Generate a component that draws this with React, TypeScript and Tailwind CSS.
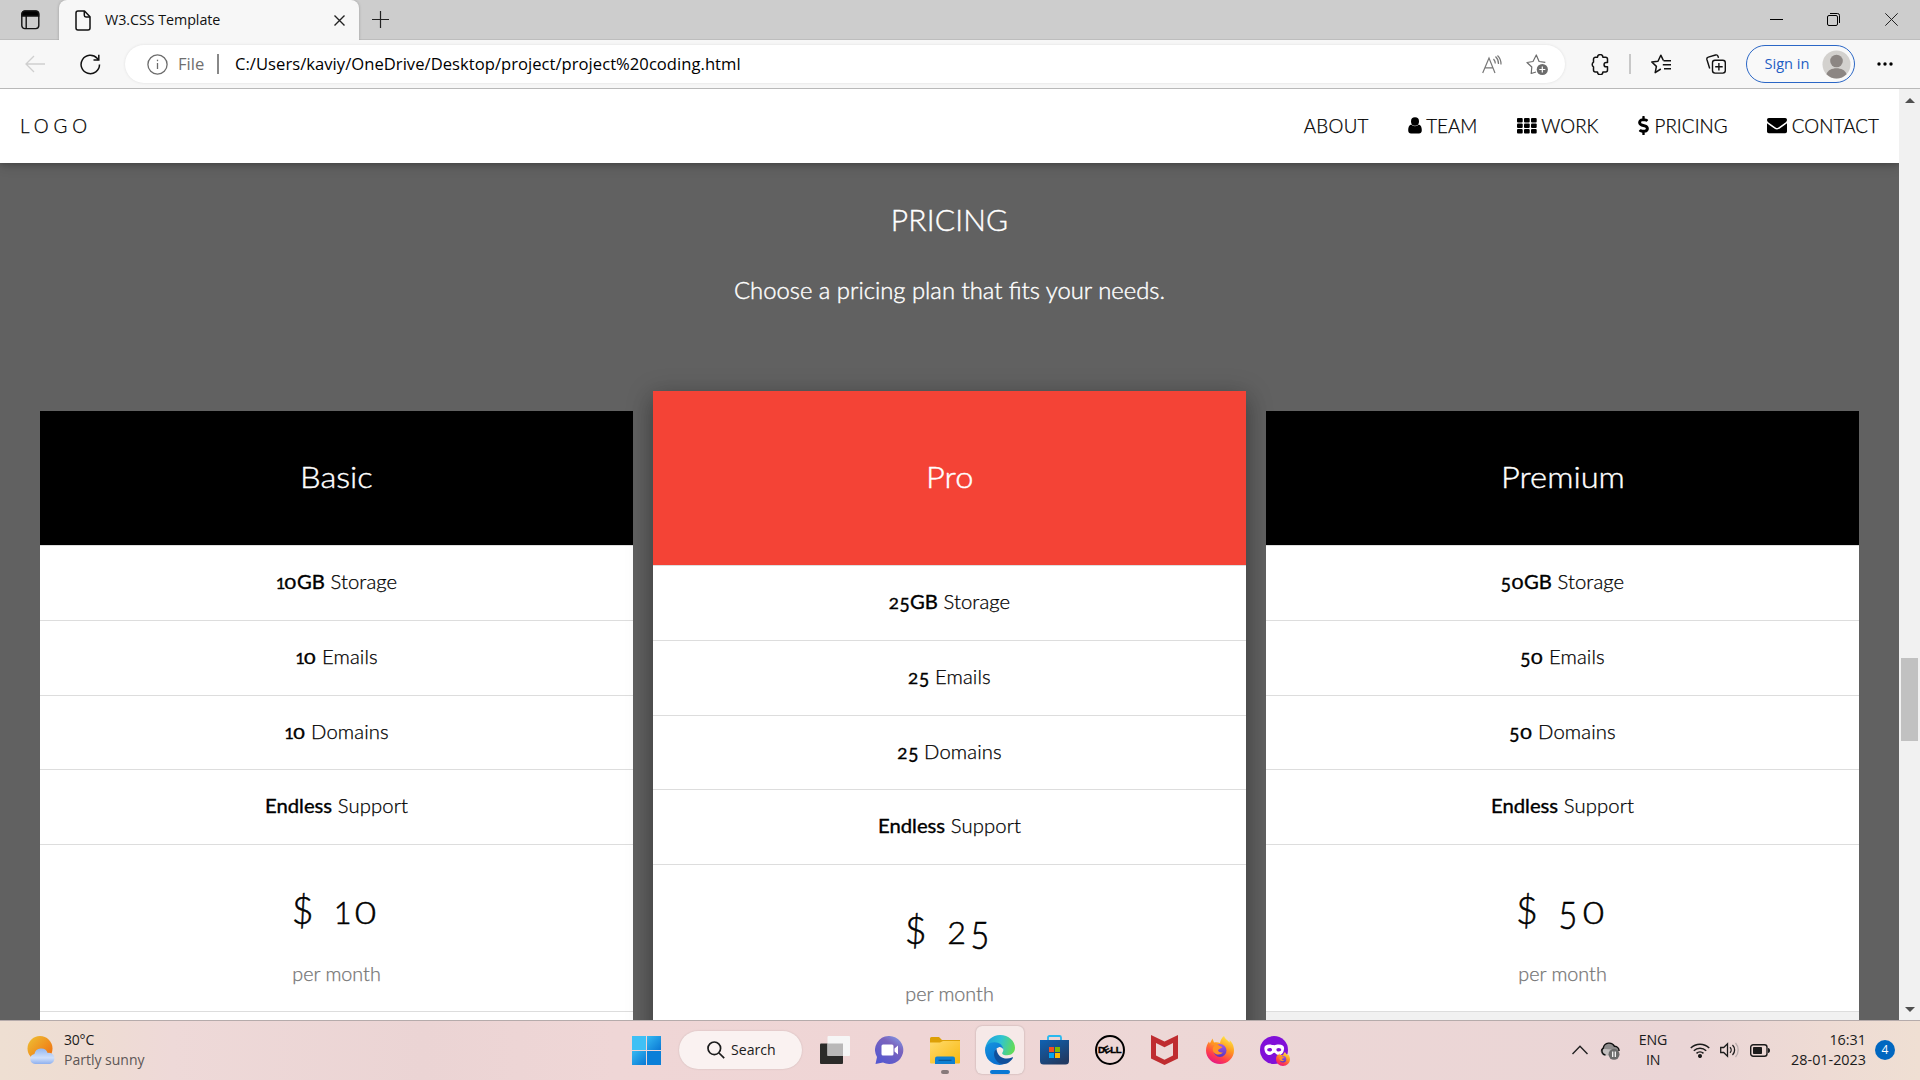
import type { ReactNode } from 'react';
import { FaDollarSign } from 'react-icons/fa';

const RALE = "font-['Lato',sans-serif] font-light [-webkit-text-stroke:0.25px_currentColor]";
const UI = "font-['Open_Sans',sans-serif]";

const digitClass: Record<string, string> = {
  '0': 'w-[0.75em] scale-x-[1.2]',
  '1': 'w-[0.53em]',
  '2': 'w-[0.63em] scale-x-105',
  '5': 'w-[0.65em] translate-y-[0.1em] scale-x-105 scale-y-[1.22]',
};

/* Old-style figures: x-height digits, with the five dropping below the baseline. */
function Figures({ value, gap = '' }: { value: string; gap?: string }) {
  return (
    <span className="text-[0.82em] leading-none tracking-normal">
      {value.split('').map((d, i) => (
        <span key={i} className={`inline-block text-center leading-none ${gap} ${digitClass[d]}`}>{d}</span>
      ))}
    </span>
  );
}

function TabStrip() {
  return (
    <div className="flex h-10 items-center bg-[#cdcdcd] shadow-[inset_0_-1px_0_#bdbdbd]">
      <svg className="ml-[21px] shrink-0" width="19" height="20" viewBox="0 0 19 20" fill="none" stroke="#111" strokeWidth="1.4">
        <rect x="0.8" y="1.2" width="17" height="17.4" rx="3" />
        <path d="M1 6V4a3 3 0 0 1 3-3h10.600a3 3 0 0 1 3 3v2z" fill="#000" />
        <path d="M5.200 6v12.500" />
      </svg>
      <div className="ml-[19px] flex h-10 w-[300px] items-center rounded-t-lg bg-[#f7f7f7] shadow-[0_0_3px_rgba(0,0,0,0.25)]">
        <svg className="ml-4 shrink-0" width="16" height="21" viewBox="0 0 16 21" fill="none" stroke="#111" strokeWidth="1.5" strokeLinejoin="round">
          <path d="M3 1h6.500L15 6.700V18a2 2 0 0 1-2 2H3a2 2 0 0 1-2-2V3a2 2 0 0 1 2-2z" />
          <path d="M9.300 1v4.200A1.800 1.800 0 0 0 11 7h4" />
        </svg>
        <span className="ml-[14px] w-[229px] text-[14.3px] leading-5 tracking-[-0.05px] text-[#111]">W3.CSS Template</span>
        <svg width="11" height="11" viewBox="0 0 11 11" stroke="#222" strokeWidth="1.4"><path d="M0.500 0.500l10 10M10.500 0.500l-10 10" /></svg>
      </div>
      <svg className="ml-[13px] mb-px" width="17" height="17" viewBox="0 0 17 17" stroke="#222" strokeWidth="1.2"><path d="M8.500 0v17M0 8.500h17" /></svg>
      <div className="ml-auto mr-[22px] flex items-center pb-px">
        <svg width="13" height="13" viewBox="0 0 13 13" stroke="#000"><path d="M0 6.500h13" /></svg>
        <svg className="ml-[44px]" width="13" height="13" viewBox="0 0 13 13" fill="none" stroke="#000">
          <rect x="0.500" y="2.500" width="10" height="10" rx="1.500" />
          <path d="M3 0.500h7.500a2 2 0 0 1 2 2V10" />
        </svg>
        <svg className="ml-[45px]" width="13" height="13" viewBox="0 0 13 13" stroke="#222"><path d="M0.300 0.300l12.400 12.400M12.700 0.300L0.300 12.700" /></svg>
      </div>
    </div>
  );
}

function Toolbar() {
  return (
    <div className="flex h-[49px] items-center border-b border-[#b9b9b9] bg-[#f7f7f7]">
      <svg className="ml-[25px] mb-px" width="20" height="18" viewBox="0 0 20 18" fill="none" stroke="#cfcfcf" strokeWidth="1.3"><path d="M9 1L1 9l8 8M1 9h19" /></svg>
      <svg className="ml-[35px]" width="21" height="21" viewBox="0 0 21 21" fill="none" stroke="#111" strokeWidth="1.5">
        <path d="M19.500 10.500a9.200 9.200 0 1 1-2.400-6.200l1.300 1.700" />
        <path d="M18.800 0.800v5.300h-5.300" />
      </svg>
      <div className="ml-[24px] flex h-[38px] w-[1440px] items-center rounded-full bg-white shadow-[0_0_3px_rgba(0,0,0,0.1)]">
        <svg className="ml-[22px]" width="21" height="21" viewBox="0 0 21 21" fill="none" stroke="#6c6c6c" strokeWidth="1.300">
          <circle cx="10.500" cy="10.500" r="9.600" /><path d="M10.500 9v6" /><path d="M10.500 5.700v1.500" />
        </svg>
        <span className="ml-[10px] w-[39px] text-[16.600px] text-[#6f6f6f]">File</span>
        <span className="h-5 w-[1.500px] bg-[#888]" />
        <span className="ml-[16.500px] w-[1247px] text-[16.600px] tracking-[0.030px] text-black">C:/Users/kaviy/OneDrive/Desktop/project/project%20coding.html</span>
        <svg width="20" height="19" viewBox="0 0 20 19" fill="none" stroke="#777" strokeWidth="1.200">
          <path d="M0.700 18L7 3l6 15M3 12.800h8" /><path d="M11.500 4a7 7 0 0 1 1.800 4.500M13.500 1.500a10 10 0 0 1 3 7.500M15.500 0.500a12 12 0 0 1 3.500 9" />
        </svg>
        <svg className="ml-[24px] mt-0.5" width="23" height="22" viewBox="0 0 23 22" fill="none" stroke="#6c6c6c" strokeWidth="1.200" strokeLinejoin="round">
          <path d="M10 18l-4.800 1.500 0.600-6.500L1 8.500l6-1L10.300 1l2.800 6.500 6.200 0.800" />
          <circle cx="16.300" cy="15.500" r="5.600" fill="#6c6c6c" stroke="none" /><path d="M16.300 12.500v6M13.300 15.500h6" stroke="#fff" />
        </svg>
      </div>
      <svg className="ml-[25px]" width="19" height="21" viewBox="0 0 19 21" fill="none" stroke="#111" strokeWidth="1.500" strokeLinejoin="round">
        <path d="M5.500 3.300h2a2.700 2.700 0 0 1 5.400 0h2.600a2 2 0 0 1 2 2v3.200h-1.300a2.100 2.100 0 0 0 0 4.300h1.300v3.200a2 2 0 0 1-2 2h-2.600a2.700 2.700 0 0 1-5.400 0h-2a2 2 0 0 1-2-2v-3.200a2.700 2.700 0 0 1 0-4.600V5.300a2 2 0 0 1 2-2z" />
      </svg>
      <span className="ml-[20px] h-5 w-[1.500px] bg-[#c8c8c8]" />
      <svg className="ml-[20px]" width="20" height="20" viewBox="0 0 20 20" fill="none" stroke="#111" strokeWidth="1.500" strokeLinejoin="round">
        <path d="M9.800 15L4.200 18.600l1.200-6.200L0.800 8l6.200-0.700L9.800 1.200l2.600 5.300M12.500 6.800H20M11.800 10.800H20M13 14.800h7" />
      </svg>
      <svg className="ml-[35px]" width="20" height="20" viewBox="0 0 20 20" fill="none" stroke="#111" strokeWidth="1.400">
        <rect x="6.500" y="6.300" width="12.800" height="12.800" rx="2.500" /><path d="M12.900 9v7.500M9.200 12.700h7.500M3.700 14.500L0.900 5.500a2 2 0 0 1 1.400-2.400L9.500 1a2 2 0 0 1 2.500 1.300l0.500 1.600" />
      </svg>
      <div className="ml-[20px] flex h-[38px] w-[109px] items-center rounded-full border-[1.500px] border-[#2b67c6] bg-[#f9f9f9]">
        <span className="ml-[18px] w-[57px] text-[14.600px] text-[#1f5fc4]">Sign in</span>
        <svg width="29" height="29" viewBox="0 0 29 29"><circle cx="14.500" cy="14.500" r="14" fill="#d3d1ce" /><circle cx="14.500" cy="11" r="6.300" fill="#8c8683" /><path d="M4.500 24.300c2-8 18-8 20 0a14 14 0 0 1-20 0z" fill="#8c8683" /></svg>
      </div>
      <svg className="ml-[22px]" width="16" height="4" viewBox="0 0 16 4"><circle cx="2" cy="2" r="1.700" /><circle cx="8" cy="2" r="1.700" /><circle cx="14" cy="2" r="1.700" /></svg>
    </div>
  );
}

function UserIcon() {
  return <svg width="14" height="17" viewBox="0 0 14 17"><ellipse cx="7" cy="4.500" rx="4" ry="4.200" /><path d="M3.200 7.600C1 8 0.200 10.500 0.200 13.300 0.200 15.500 1.400 16.400 3 16.400h8c1.600 0 2.800-0.900 2.800-3.100 0-2.800-0.800-5.300-3-5.700a5 5 0 0 1-7.600 0z" /></svg>;
}
function GridIcon() {
  return (
    <svg width="20" height="16" viewBox="0 0 20 16">
      {[0, 5.500, 11].map((y) => [0, 7, 14].map((x) => <rect key={`${x}-${y}`} x={x} y={y} width="5.700" height="4.400" rx="1" />))}
    </svg>
  );
}
function MailIcon() {
  return <svg width="20" height="17" viewBox="0 0 20 17"><path d="M1.800 1h16.400A1.800 1.800 0 0 1 20 2.800c0 1.200-0.900 2.300-1.900 3l-5.600 3.900c-0.700 0.500-1.700 1.300-2.500 1.300s-1.800-0.800-2.500-1.300L1.900 5.800C0.900 5.100 0 4 0 2.800A1.800 1.800 0 0 1 1.800 1z" /><path d="M0 6.300c1.900 1.700 4 2.900 6.200 4.500 1.100 0.800 2.400 1.700 3.800 1.700s2.700-0.900 3.800-1.700c2.200-1.600 4.300-2.800 6.200-4.500v8.200a1.800 1.800 0 0 1-1.800 1.800H1.800A1.800 1.800 0 0 1 0 14.500z" /></svg>;
}

function NavItem({ icon, className, children }: { icon?: ReactNode; className: string; children: string }) {
  return (
    <a className={`flex items-center ${className}`}>
      {icon}
      <span>{children}</span>
    </a>
  );
}

function Nav() {
  return (
    <nav className={`relative z-10 flex h-[74px] shrink-0 items-center bg-white pb-px text-[18.750px] leading-7 text-black shadow-[0_2px_5px_rgba(0,0,0,0.16),0_2px_12px_rgba(0,0,0,0.2)] ${RALE}`}>
      <span className="ml-[20px] tracking-[5px]">LOGO</span>
      <div className="ml-auto mr-[20px] flex items-center">
        <NavItem className="mr-[39.500px] tracking-[0.300px]">ABOUT</NavItem>
        <NavItem className="mr-[40px] gap-1" icon={<UserIcon />}>TEAM</NavItem>
        <NavItem className="mr-[40px] gap-[4px]" icon={<GridIcon />}>WORK</NavItem>
        <NavItem className="mr-[39px] gap-[5px] tracking-[0.100px]" icon={<FaDollarSign className="h-[19px] w-[11px]" />}>PRICING</NavItem>
        <NavItem className="gap-[5px] tracking-[0.100px]" icon={<MailIcon />}>CONTACT</NavItem>
      </div>
    </nav>
  );
}

function Row({ figure, strong, label, height }: { figure?: string; strong?: string; label: string; height: string }) {
  return (
    <li className={`border-b border-[#ddd] pt-[22px] text-center text-[18.750px] leading-7 ${height}`}>
      <div className="scale-x-[1.08]">
        <b className="font-normal [-webkit-text-stroke:0.350px_currentColor]">
          {figure && <Figures value={figure} />}
          {strong}
        </b>
        <span className="tracking-[0.100px]"> {label}</span>
      </div>
    </li>
  );
}

function Plan({ name, amount, featured, footer }: { name: string; amount: string; featured?: boolean; footer: string }) {
  return (
    <ul className={`w-[593px] shrink-0 bg-white text-black ${featured ? 'shadow-[0_10px_20px_rgba(0,0,0,0.19),0_5px_25px_rgba(0,0,0,0.25)]' : 'mt-5'}`}>
      <li className={`flex items-center justify-center border-b border-[#ddd] pb-[3px] text-[30px] text-white [-webkit-text-stroke:0.400px_currentColor] ${featured ? 'h-[175px] bg-[#f44336]' : 'h-[135px] bg-black'}`}>
        <span className="scale-x-[1.088]">{name}</span>
      </li>
      <Row figure={amount} strong="GB" label="Storage" height="h-[75px]" />
      <Row figure={amount} label="Emails" height="h-[75px]" />
      <Row figure={amount} label="Domains" height="h-[74px]" />
      <Row strong="Endless" label="Support" height="h-[75px]" />
      <li className="h-[167px] border-b border-[#ddd] pt-[37px] text-center">
        <h2 className="h-[56px] text-[37.500px] leading-[56px] tracking-[5px] [-webkit-text-stroke:0.500px_currentColor]">$ <Figures value={amount} gap="mr-[4px]" /></h2>
        <p className="mt-[22px] scale-x-[1.055] text-[18.750px] leading-[28px] text-[#757575]">per month</p>
      </li>
      <li className={`h-[60px] ${footer}`} />
    </ul>
  );
}

function Pricing() {
  return (
    <main className={`flex min-h-0 flex-1 flex-col items-center overflow-hidden bg-[#616161] text-white ${RALE}`}>
      <h3 className="mt-[34px] text-[30px] leading-[45px] tracking-[0.200px] [-webkit-text-stroke:0.400px_currentColor]">PRICING</h3>
      <p className="mt-[32px] scale-x-[1.059] text-[22.500px] leading-[34px] [-webkit-text-stroke:0.400px_currentColor]">Choose a pricing plan that fits your needs.</p>
      <div className="mt-[83px] flex items-start gap-5">
        <Plan name="Basic" amount="10" footer="bg-white" />
        <Plan name="Pro" amount="25" featured footer="bg-white" />
        <Plan name="Premium" amount="50" footer="bg-[#f1f1f1]" />
      </div>
    </main>
  );
}

function Scrollbar() {
  return (
    <div className="flex w-[21px] shrink-0 flex-col items-center bg-[#f1f1f1]">
      <span className="mt-[9px] border-x-[5px] border-b-[5px] border-x-transparent border-b-[#505050]" />
      <span className="mt-[555px] h-[83px] w-[17px] bg-[#c1c1c1]" />
      <span className="mt-auto mb-[8px] border-x-[5px] border-t-[5px] border-x-transparent border-t-[#505050]" />
    </div>
  );
}

function TaskbarApp({ children, active, mark }: { children: ReactNode; active?: boolean; mark?: string }) {
  return (
    <div className="flex w-[55px] justify-center">
      <div className={`relative flex size-12 items-center justify-center rounded-md ${active ? 'bg-[#f6e9e8] shadow-[0_0_2px_rgba(0,0,0,0.25)]' : ''}`}>
        {children}
        {mark && <span className={`absolute bottom-0 h-1 rounded-full ${mark}`} />}
      </div>
    </div>
  );
}

function EdgeIcon() {
  return (
    <svg width="30" height="30" viewBox="0 0 24 24">
      <defs>
        <linearGradient id="edgeTop" x1="0" y1="0.300" x2="1" y2="0.500"><stop offset="0" stopColor="#1fa0dc" /><stop offset="0.500" stopColor="#2fc3d2" /><stop offset="1" stopColor="#63dc55" /></linearGradient>
        <linearGradient id="edgeMid" x1="0" y1="0" x2="0.500" y2="1"><stop offset="0" stopColor="#1595df" /><stop offset="1" stopColor="#0a6fcf" /></linearGradient>
      </defs>
      <path d="M0.200 11C0.900 4.500 6 0 12 0c7 0 12 5 12 10.200 0 3.800-3 6-6.300 6-2.500 0-4-0.900-4-1.700 0-0.500 1-1.200 1-2.800C14.700 9 12 6.700 8 6.700 4 6.700 1.500 8.500 0.200 11z" fill="url(#edgeTop)" />
      <path d="M0 12c0-3.500 3.300-6.300 7.500-6.300 4 0 7.200 2.500 7.200 6-0.700-1.400-2-2.200-3.500-2-2.700 0.500-4 3.500-3 7 1 3.500 3.500 5.700 6.300 6.900-8 1.700-14.500-4-14.500-11.600z" fill="url(#edgeMid)" />
      <path d="M9.200 10.900c-3.400 2.600-2.400 9.300 3 12.100 4.300 1.300 8-1.300 10-4.400 0.500-0.800 0-1-0.700-0.700-5 2.400-11.800 0-12.300-7z" fill="#10509c" />
    </svg>
  );
}

function FirefoxIcon({ size, id }: { size: number; id: string }) {
  return (
    <svg width={size} height={size} viewBox="0 0 28 28">
      <defs>
        <linearGradient id={`${id}-f`} x1="0.800" y1="0" x2="0.300" y2="1"><stop offset="0" stopColor="#fff04a" /><stop offset="0.400" stopColor="#ff9a1f" /><stop offset="0.750" stopColor="#ff3c4d" /><stop offset="1" stopColor="#e3158a" /></linearGradient>
        <linearGradient id={`${id}-g`} x1="0.500" y1="0" x2="0.500" y2="1"><stop offset="0" stopColor="#a05ae8" /><stop offset="1" stopColor="#5a35bf" /></linearGradient>
      </defs>
      <path d="M18 0c1 3 3.500 4 5.500 6.500 0.300-1 0.200-1.600 0-2.200C27 7 28 11 28 14.500 28 22 21.800 28 14 28S0 22 0 14.500C0 10.500 1.500 7.500 3 5.500l0.800 2L6.500 2.500 8 6.500c2.500-0.500 4.500-0.300 6 0.500C14.500 4 16 1.500 18 0z" fill={`url(#${id}-f)`} />
      <circle cx="14" cy="14.500" r="6.500" fill={`url(#${id}-g)`} />
      <path d="M4 8c3-1.500 6-1 9 1.500 1.500 1 3 1 3.500 1.500-1 1.800-3.500 1.500-4.500 3 0 2 2.500 3 5 2.300-2 2.700-6 3-8.500 0.700C6 15 6.500 11 8.500 9.500 7 8.500 5.500 8.200 4 8z" fill="#ff9325" />
    </svg>
  );
}

function Taskbar() {
  return (
    <footer className={`flex h-[60px] shrink-0 items-center border-t border-[#b5abab] pb-px bg-[linear-gradient(90deg,#eedfd2_0%,#eedcd3_5%,#eed9d8_9%,#ebd4d4_22%,#efd6d6_32%,#efd5d5_48%,#edd7d6_60%,#ead5d6_88%,#eedbd4_95%,#efdfd3_100%)] ${UI}`}>
      <div className="flex w-[619px] items-center pl-[27px]">
        <svg width="29" height="30" viewBox="0 0 29 30">
          <defs>
            <linearGradient id="sun" x1="0" y1="0" x2="1" y2="1"><stop offset="0" stopColor="#eec235" /><stop offset="1" stopColor="#f0660c" /></linearGradient>
            <linearGradient id="cloud" x1="0" y1="0" x2="0" y2="1"><stop offset="0" stopColor="#94b7f0" /><stop offset="0.600" stopColor="#d0e0fb" /><stop offset="1" stopColor="#8fb0ee" /></linearGradient>
          </defs>
          <circle cx="13" cy="13.500" r="12.500" fill="url(#sun)" />
          <path d="M8 29a5 5 0 0 1-0.600-9.900 7 7 0 0 1 13.300-1.200A5.600 5.600 0 0 1 23 29z" fill="url(#cloud)" />
        </svg>
        <div className="ml-[8px] text-[14px] leading-[20px]">
          <div className="tracking-[-0.200px] text-[#1b1b1b]">30°C</div>
          <div className="text-[#5d5655]">Partly sunny</div>
        </div>
      </div>
      <TaskbarApp>
        <svg width="29" height="29" viewBox="0 0 29 29">
          <defs><linearGradient id="win" x1="0" y1="0" x2="1" y2="1"><stop offset="0" stopColor="#35b9f2" /><stop offset="1" stopColor="#0a78d4" /></linearGradient></defs>
          <rect width="14" height="14" fill="#3fc0f5" /><rect x="15" width="14" height="14" fill="url(#win)" /><rect y="15" width="14" height="14" fill="url(#win)" /><rect x="15" y="15" width="14" height="14" fill="#0b7fd8" />
        </svg>
      </TaskbarApp>
      <div className="ml-[5px] mr-[5px] flex h-[38px] w-[123px] items-center rounded-full bg-[#faf2f1] shadow-[0_0_2px_rgba(0,0,0,0.15)]">
        <svg className="ml-[28px]" width="18" height="18" viewBox="0 0 18 18" fill="none" stroke="#1b1b1b" strokeWidth="1.700"><circle cx="7.300" cy="7.300" r="6.300" /><path d="M12 12l5.200 5.200" /></svg>
        <span className="ml-[6px] text-[14.100px] text-[#1b1b1b]">Search</span>
      </div>
      <TaskbarApp>
        <svg width="30" height="28" viewBox="0 0 30 28"><rect y="7.500" width="23" height="20.500" rx="1" fill="#2b2b29" /><rect x="7.500" width="22.500" height="20" rx="1" fill="#f6f6f6" /><path d="M7.500 7.500H23V20H7.500z" fill="#b9b8b8" /></svg>
      </TaskbarApp>
      <TaskbarApp>
        <svg width="29" height="28" viewBox="0 0 29 28">
          <defs><linearGradient id="chat" x1="1" y1="0" x2="0.300" y2="1"><stop offset="0" stopColor="#82a6f0" /><stop offset="0.400" stopColor="#7a63bd" /><stop offset="1" stopColor="#5558cf" /></linearGradient></defs>
          <path d="M14.500 0A14 14 0 1 1 8 26.500L0.500 28 2 21A14 14 0 0 1 14.500 0z" fill="url(#chat)" /><rect x="6.500" y="8.500" width="12" height="11" rx="1.500" fill="#fff" /><path d="M19.500 12.500l3.500-3v9l-3.500-3z" fill="#fff" />
        </svg>
      </TaskbarApp>
      <TaskbarApp mark="w-2 bg-[#87797a]">
        <svg width="30" height="27" viewBox="0 0 30 27"><defs><linearGradient id="folder" x1="0" y1="0" x2="1" y2="1"><stop offset="0" stopColor="#ffda6b" /><stop offset="1" stopColor="#f9b90f" /></linearGradient></defs><path d="M0 1.500A1.500 1.500 0 0 1 1.500 0H9l3 3h18v6H0z" fill="#dda006" /><path d="M0 5.500h10l3-1.500h17v21.500a1 1 0 0 1-1 1H1a1 1 0 0 1-1-1z" fill="url(#folder)" /><path d="M5 27v-5.500A2 2 0 0 1 7 19.500h16a2 2 0 0 1 2 2V27z" fill="#0f80d2" /><path d="M8.500 23.300h13" stroke="#0b5594" strokeWidth="1.200" /></svg>
      </TaskbarApp>
      <TaskbarApp active mark="w-5 bg-[#0a78d4]"><EdgeIcon /></TaskbarApp>
      <TaskbarApp>
        <svg width="29" height="30" viewBox="0 0 29 30"><defs><linearGradient id="store" x1="0" y1="0" x2="0.600" y2="1"><stop offset="0" stopColor="#0f62b3" /><stop offset="1" stopColor="#213a63" /></linearGradient></defs><path d="M8 6V2.500A1.500 1.500 0 0 1 9.500 1h10A1.500 1.500 0 0 1 21 2.500V6" fill="none" stroke="#29b9ef" strokeWidth="1.800" /><path d="M0 5h29v21a3.500 3.500 0 0 1-3.500 3.500h-22A3.500 3.500 0 0 1 0 26z" fill="url(#store)" /><path d="M9 12h5v5H9z" fill="#f25022" /><path d="M15 12h5v5h-5z" fill="#7fba00" /><path d="M9 18h5v5H9z" fill="#00a4ef" /><path d="M15 18h5v5h-5z" fill="#ffb900" /></svg>
      </TaskbarApp>
      <TaskbarApp>
        <span className="flex size-[30px] items-center justify-center rounded-full border-2 border-black font-['Liberation_Sans',sans-serif] text-[9.500px] font-bold tracking-[-0.400px] text-black [-webkit-text-stroke:0.400px_#000]">
          D<span className="-rotate-[30deg]">E</span>LL
        </span>
      </TaskbarApp>
      <TaskbarApp>
        <svg width="27" height="30" viewBox="0 0 27 30" fill="#bf2c30"><path fillRule="evenodd" d="M0 0l13.500 6.500L27 0v23.500L13.500 30 0 23.500zM5 8v12.500l8.500 4.300 8.500-4.300V8l-8.500 4.300z" /></svg>
      </TaskbarApp>
      <TaskbarApp><FirefoxIcon size={28} id="fx" /></TaskbarApp>
      <TaskbarApp>
        <span className="relative flex size-[29px]">
          <svg width="29" height="29" viewBox="0 0 29 29"><circle cx="14" cy="14" r="14" fill="#8010d8" /><path fillRule="evenodd" d="M9.500 8.500c2 0 3.500 0.700 4.700 0.700s2.700-0.700 4.700-0.700c3.500 0 5.600 1.500 5.100 4.500-0.400 3.500-2 6-5 6-2.700 0-3.500-2.300-4.800-2.300S12 19 9.400 19c-3 0-4.600-2.500-5-6C4 10 6 8.500 9.500 8.500zM9.700 12c-1.500 0-2.500 0.800-2.500 1.800s1 1.700 2.500 1.700 2.300-0.800 2.300-1.800S11.200 12 9.700 12zM18.700 12c-1.500 0-2.300 0.800-2.300 1.700s0.800 1.800 2.300 1.800 2.500-0.700 2.500-1.700S20.200 12 18.700 12z" fill="#fff" /></svg>
          <span className="absolute -bottom-[1px] -right-[1px]"><FirefoxIcon size={14} id="fxs" /></span>
        </span>
      </TaskbarApp>
      <div className="ml-auto flex items-center text-[#1b1b1b]">
        <svg width="16" height="10" viewBox="0 0 16 10" fill="none" stroke="#222" strokeWidth="1.400"><path d="M0.500 9L8 1.200 15.500 9" /></svg>
        <svg className="ml-[12px] mt-[2px]" width="20" height="18" viewBox="0 0 20 18"><path d="M4.500 12.500A3.500 3.500 0 0 1 3.300 6 6 6 0 0 1 14.500 4.300 4.300 4.300 0 0 1 19 9" fill="#8e8c8c" stroke="#111" strokeWidth="1.400" /><path d="M1 10a3.500 3.500 0 0 1 4-3l12 1-7 5.500H5A4 4 0 0 1 1 10z" fill="#c4c0c0" /><path d="M5.500 13A4 4 0 0 1 3.300 6" fill="none" stroke="#111" strokeWidth="1.400" /><circle cx="14" cy="12.300" r="5.500" fill="#6b6b6b" /><path d="M12.700 9.500v5.500M15.300 9.500v5.500" stroke="#fff" strokeWidth="1.200" /></svg>
        <div className="ml-[17px] w-[32px] text-center text-[14.200px] leading-[20px] tracking-[-0.200px]">ENG<br />IN</div>
        <svg className="ml-[21px]" width="20" height="16" viewBox="0 0 20 16" fill="none" stroke="#1b1b1b" strokeWidth="1.500"><path d="M0.800 6a13 13 0 0 1 18.400 0M3.800 8.800a9 9 0 0 1 12.400 0M6.500 11.400a5 5 0 0 1 7 0" /><circle cx="10" cy="14" r="1.300" fill="#1b1b1b" /></svg>
        <svg className="ml-[10px]" width="20" height="16" viewBox="0 0 20 16" fill="none" stroke="#1b1b1b" strokeWidth="1.300"><path d="M0.700 5.500h3L7.500 1.800v12.400L3.700 10.500h-3z" /><path d="M10 5.200a4 4 0 0 1 0 5.600M12.500 3a7 7 0 0 1 0 10" /><path d="M15.500 1a10.500 10.500 0 0 1 0 14" stroke="#b9adad" /></svg>
        <svg className="ml-[10px]" width="20" height="13" viewBox="0 0 20 13"><rect x="0.700" y="0.700" width="16.300" height="11.600" rx="2.500" fill="none" stroke="#1b1b1b" strokeWidth="1.400" /><rect x="3" y="3" width="9" height="7" rx="0.800" fill="#1b1b1b" /><path d="M18 4v5c1.300 0 2-1 2-2.500S19.300 4 18 4z" fill="#1b1b1b" /></svg>
        <div className="ml-[15px] w-[81px] text-right text-[14.400px] leading-[20px] tracking-[-0.020px]">16:31<br />28-01-2023</div>
        <span className="ml-[9px] mr-[25px] flex size-5 items-center justify-center rounded-full bg-[#0067c0] text-[12px] text-white">4</span>
      </div>
    </footer>
  );
}

export default function App() {
  return (
    <div className={`flex h-[1080px] w-[1920px] flex-col overflow-hidden bg-white ${UI}`}>
      <TabStrip />
      <Toolbar />
      <div className="flex min-h-0 flex-1">
        <div className="flex min-w-0 flex-1 flex-col overflow-hidden">
          <Nav />
          <Pricing />
        </div>
        <Scrollbar />
      </div>
      <Taskbar />
    </div>
  );
}
